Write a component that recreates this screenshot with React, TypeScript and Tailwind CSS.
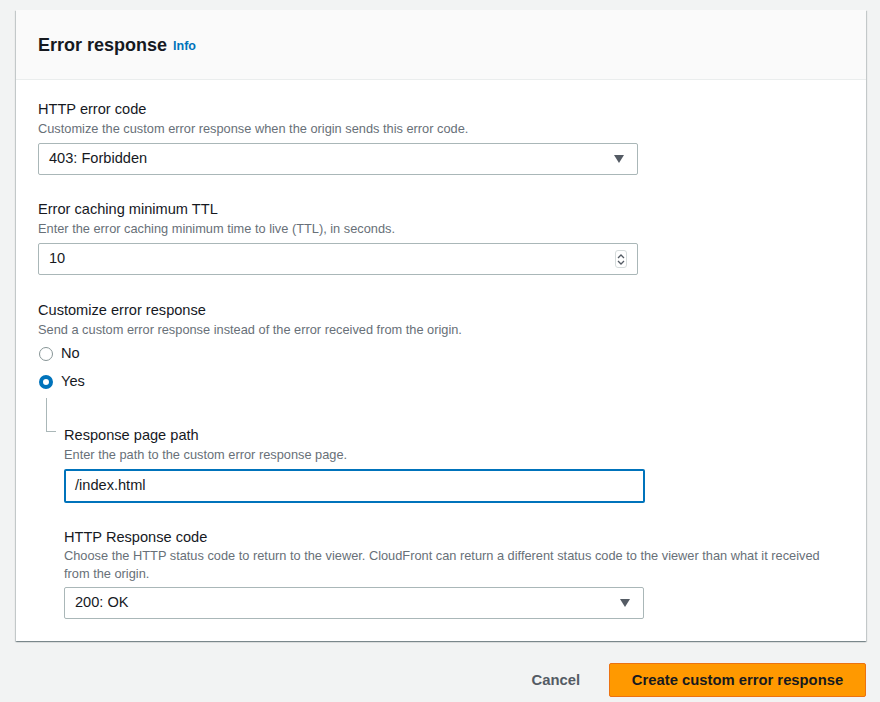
import React from "react";

function Caret() {
  return (
    <svg width="12" height="10" viewBox="0 0 12 10" className="text-[#545b64]">
      <path d="M1 1h10L6 9z" fill="currentColor" />
    </svg>
  );
}

function Spinner() {
  return (
    <div className="w-[12px] h-[18px] rounded-[3px] border border-[#d5dbdb] flex flex-col items-center justify-center gap-[1px]">
      <svg width="8" height="5" viewBox="0 0 8 5">
        <path d="M1 4l3-3 3 3" fill="none" stroke="#545b64" strokeWidth="1.3" />
      </svg>
      <svg width="8" height="5" viewBox="0 0 8 5">
        <path d="M1 1l3 3 3-3" fill="none" stroke="#545b64" strokeWidth="1.3" />
      </svg>
    </div>
  );
}

function Field({
  label,
  description,
  children,
}: {
  label: string;
  description: React.ReactNode;
  children: React.ReactNode;
}) {
  return (
    <div className="flex flex-col">
      <span className="text-[14.6px] leading-[20px] text-[#16191f]">{label}</span>
      <span className="text-[12.8px] leading-[16px] text-[#687078] mt-[2px]">{description}</span>
      <div className="mt-[6px]">{children}</div>
    </div>
  );
}

function Radio({ label, checked }: { label: string; checked?: boolean }) {
  return (
    <div className="flex items-center h-[28px]">
      {checked ? (
        <span className="w-[14px] h-[14px] rounded-full border-[4px] border-[#0073bb] bg-white ml-[1px]" />
      ) : (
        <span className="w-[14px] h-[14px] rounded-full border-[1.5px] border-[#879596] bg-white ml-[1px]" />
      )}
      <span className="ml-[8px] text-[14.6px] text-[#16191f]">{label}</span>
    </div>
  );
}

export default function App() {
  return (
    <div
      className="w-[880px] h-[702px] bg-[#f2f3f3] pt-[10px] px-[16px] overflow-hidden"
      style={{ fontFamily: '"Liberation Sans", Arial, sans-serif' }}
    >
      <div className="w-[850px] bg-white shadow-[0_1px_1px_0_rgba(0,28,36,0.3),1px_1px_1px_0_rgba(0,28,36,0.15),-1px_1px_1px_0_rgba(0,28,36,0.15)]">
        <div className="h-[70px] bg-[#fafafa] border-b border-[#eaeded] flex items-center pl-[22px]">
          <h2 className="text-[18px] font-bold text-[#16191f] leading-[22px]">Error response</h2>
          <span className="ml-[6px] mt-[3px] text-[12.5px] font-bold text-[#0073bb]">Info</span>
        </div>

        <div className="pl-[22px] pr-[228px] pt-[19px] pb-[22px] flex flex-col">
          <Field
            label="HTTP error code"
            description="Customize the custom error response when the origin sends this error code."
          >
            <div className="h-[32px] border border-[#aab7b8] rounded-[2px] flex items-center justify-between pl-[10px] pr-[12px]">
              <span className="text-[14.6px] text-[#16191f]">403: Forbidden</span>
              <Caret />
            </div>
          </Field>

          <div className="mt-[24px]">
            <Field
              label="Error caching minimum TTL"
              description="Enter the error caching minimum time to live (TTL), in seconds."
            >
              <div className="h-[32px] border border-[#aab7b8] rounded-[2px] flex items-center justify-between pl-[10px] pr-[10px]">
                <span className="text-[14.6px] text-[#16191f]">10</span>
                <Spinner />
              </div>
            </Field>
          </div>

          <div className="mt-[25px] flex flex-col">
            <span className="text-[14.6px] leading-[20px] text-[#16191f]">Customize error response</span>
            <span className="text-[12.8px] leading-[16px] text-[#687078] mt-[2px]">
              Send a custom error response instead of the error received from the origin.
            </span>
            <div className="mt-[2px] flex flex-col">
              <Radio label="No" />
              <Radio label="Yes" checked />
            </div>
          </div>

          <div className="flex mt-[2px]">
            <div className="w-[26px] shrink-0 pl-[8px]">
              <div className="w-[10px] h-[34px] border-l border-b border-[#aab7b8]" />
            </div>
            <div className="flex-1 flex flex-col pt-[27px] -mr-[7px]">
              <Field
                label="Response page path"
                description="Enter the path to the custom error response page."
              >
                <div className="h-[34px] border-2 border-[#0073bb] rounded-[2px] flex items-center pl-[9px]">
                  <span className="text-[14.6px] text-[#16191f]">/index.html</span>
                </div>
              </Field>

              <div className="mt-[24px] mr-[-222px]">
                <div className="flex flex-col">
                  <span className="text-[14.6px] leading-[20px] text-[#16191f]">HTTP Response code</span>
                  <span className="text-[12.8px] leading-[18px] text-[#687078] pr-[20px]">
                    Choose the HTTP status code to return to the viewer. CloudFront can return a different status code to the viewer than what it received from the origin.
                  </span>
                  <div className="mt-[4px] w-[580px] h-[32px] border border-[#aab7b8] rounded-[2px] flex items-center justify-between pl-[10px] pr-[12px]">
                    <span className="text-[14.6px] text-[#16191f]">200: OK</span>
                    <Caret />
                  </div>
                </div>
              </div>
            </div>
          </div>
        </div>
      </div>

      <div className="flex justify-end items-center mt-[22px] w-[850px]">
        <button className="text-[14.8px] font-bold text-[#545b64] px-[20px] h-[34px]">Cancel</button>
        <button className="ml-[9px] h-[34px] px-[20px] bg-[#ff9900] border border-[#ec7211] rounded-[2px] text-[14.8px] font-bold text-[#16191f] w-[257px]">
          Create custom error response
        </button>
      </div>
    </div>
  );
}
